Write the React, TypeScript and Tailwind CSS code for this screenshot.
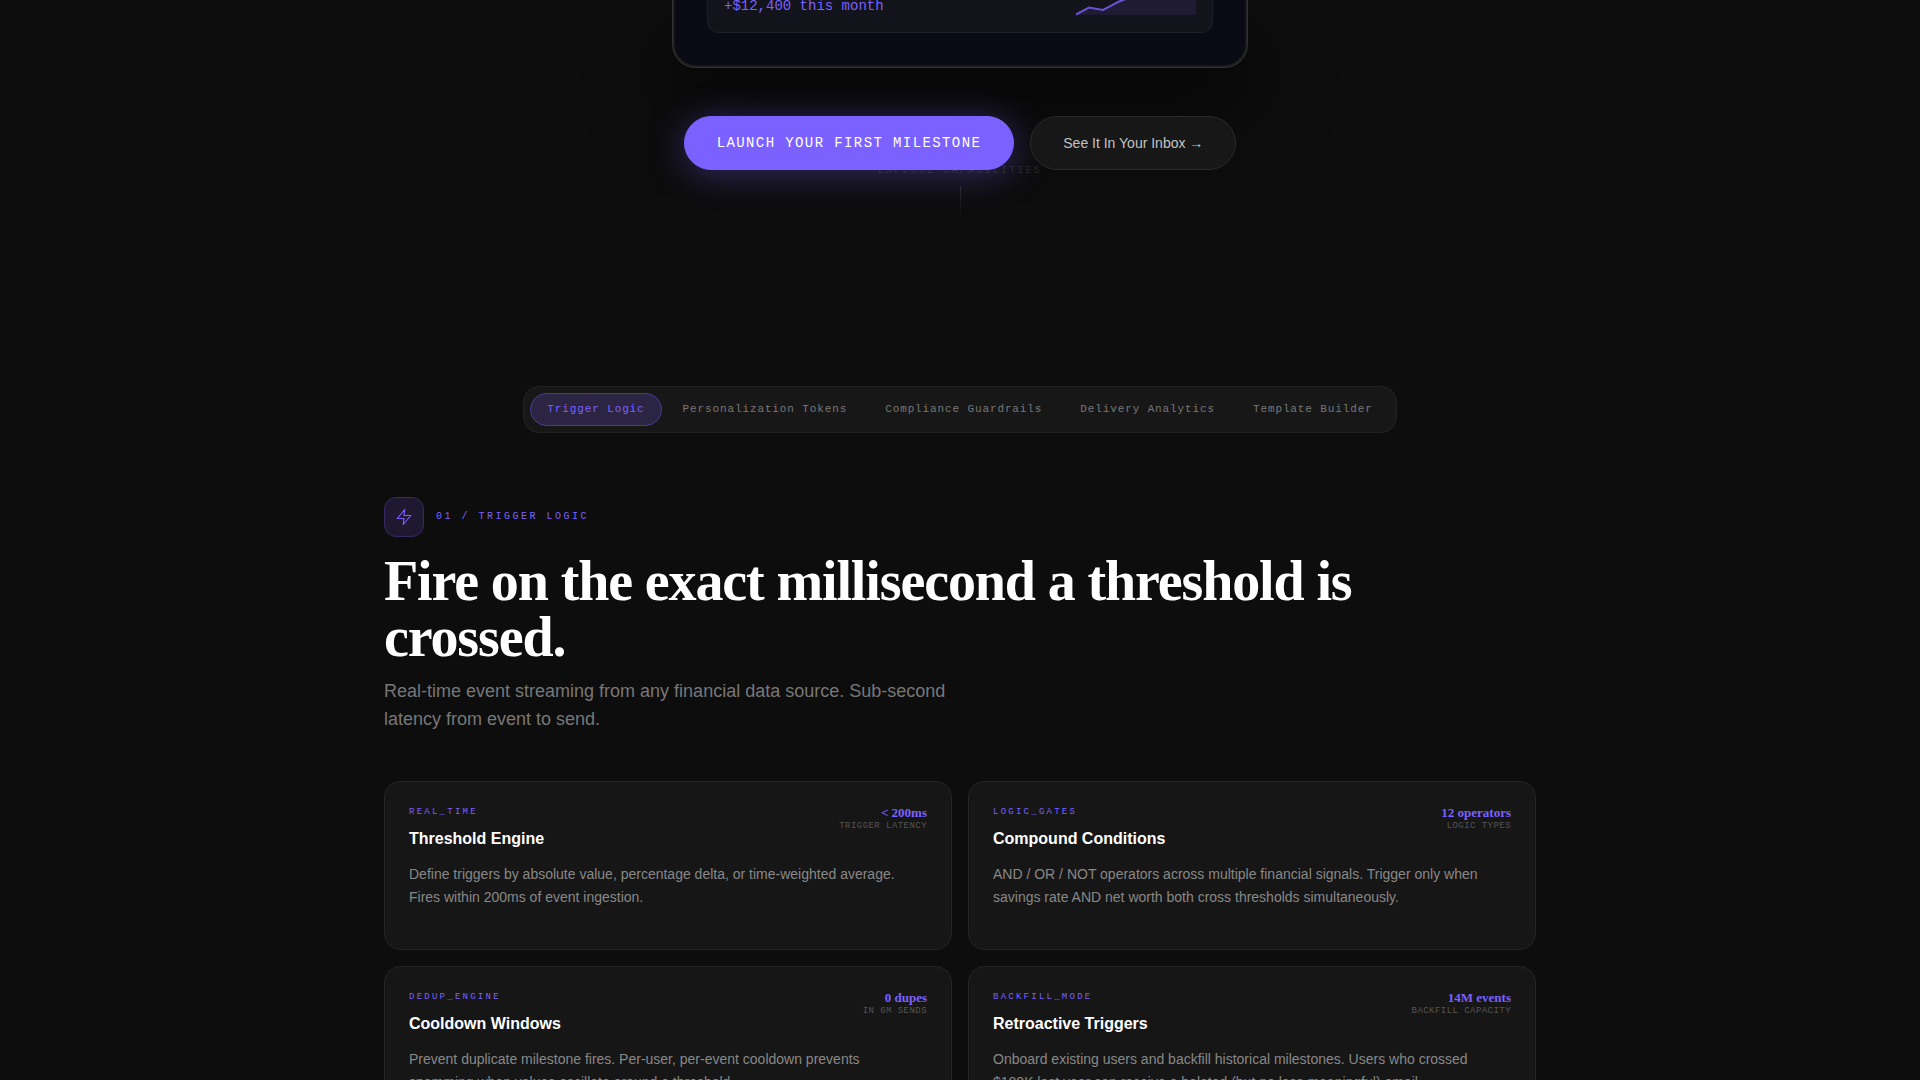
import { useState } from "react";

const tabs = [
  "Trigger Logic",
  "Personalization Tokens",
  "Compliance Guardrails",
  "Delivery Analytics",
  "Template Builder",
];

const features = [
  {
    tag: "REAL_TIME",
    title: "Threshold Engine",
    body: "Define triggers by absolute value, percentage delta, or time-weighted average. Fires within 200ms of event ingestion.",
    stat: "< 200ms",
    statLabel: "TRIGGER LATENCY",
  },
  {
    tag: "LOGIC_GATES",
    title: "Compound Conditions",
    body: "AND / OR / NOT operators across multiple financial signals. Trigger only when savings rate AND net worth both cross thresholds simultaneously.",
    stat: "12 operators",
    statLabel: "LOGIC TYPES",
  },
  {
    tag: "DEDUP_ENGINE",
    title: "Cooldown Windows",
    body: "Prevent duplicate milestone fires. Per-user, per-event cooldown prevents spamming when values oscillate around a threshold.",
    stat: "0 dupes",
    statLabel: "IN 6M SENDS",
  },
  {
    tag: "BACKFILL_MODE",
    title: "Retroactive Triggers",
    body: "Onboard existing users and backfill historical milestones. Users who crossed $100K last year can receive a belated (but no less meaningful) email.",
    stat: "14M events",
    statLabel: "BACKFILL CAPACITY",
  },
];

function BoltIcon() {
  return (
    <svg
      width="18"
      height="18"
      viewBox="0 0 24 24"
      fill="none"
      stroke="currentColor"
      strokeWidth="1.5"
      strokeLinecap="round"
      strokeLinejoin="round"
      aria-hidden="true"
    >
      <path d="M13 2 L3 14 H12 L11 22 L21 10 H12 Z" />
    </svg>
  );
}

function EmailPreview() {
  return (
    <div className="w-full max-w-xl rounded-b-3xl border border-t-0 border-[#333] bg-[#1a1a1a] px-0.5 pb-0.5 shadow-[0_40px_80px_rgba(0,0,0,0.6)]">
      <div className="rounded-b-[21px] bg-[#0a0a14] px-8 pb-8">
        <div className="flex h-[33px] items-end justify-between rounded-b-xl border border-t-0 border-[#1f1f28] bg-[#13131b] px-4 pb-4">
          <p className="font-['Liberation_Mono',monospace] text-sm leading-5 text-[#7b61ff]">+$12,400 this month</p>
          <svg width="120" height="16" viewBox="0 0 120 16" fill="none" aria-hidden="true">
            <path d="M0 15 L13 7.5 L27 10 L43 2 L50 -1 H120 V15 Z" fill="#7b61ff" fillOpacity="0.1" />
            <path d="M0 14.5 L13 7.5 L27 10 L43 1.5 L50 -1" stroke="#7b61ff" strokeOpacity="0.8" strokeWidth="2" />
          </svg>
        </div>
      </div>
    </div>
  );
}

function Hero() {
  return (
    <section className="relative flex h-[218px] flex-col items-center">
      <EmailPreview />
      <div className="z-10 mt-12 flex items-center gap-4">
        <button className="rounded-full border border-[#7b61ff] bg-[#7b61ff] px-8 py-4 font-['Liberation_Mono',monospace] text-sm leading-5 tracking-widest text-white shadow-[0_4px_36px_rgba(123,97,255,0.36)]">
          LAUNCH YOUR FIRST MILESTONE
        </button>
        <button className="rounded-full border border-[#2a2a2a] bg-[#171717] px-8 py-4 text-sm leading-5 text-[#c4c4c4]">
          See It In Your Inbox →
        </button>
      </div>
      <div className="absolute bottom-0 flex flex-col items-center gap-2">
        <span className="font-['Liberation_Mono',monospace] text-[10px] leading-[15px] tracking-[0.22em] text-[#262626]">
          EXPLORE CAPABILITIES
        </span>
        <span className="h-8 w-px bg-linear-to-b from-[#2a2a2a] to-transparent" />
      </div>
    </section>
  );
}

function FeatureCard({ feature }: { feature: (typeof features)[number] }) {
  return (
    <article className="rounded-2xl border border-[#242424] bg-[#161616] p-6 pb-10">
      <div className="mb-3 flex items-start justify-between">
        <div>
          <p className="mb-2 font-['Liberation_Mono',monospace] text-[9px] leading-[13px] tracking-[0.25em] text-[#7b61ff]">
            {feature.tag}
          </p>
          <h3 className="text-base font-bold text-white">{feature.title}</h3>
        </div>
        <div className="text-right">
          <p className="font-['Liberation_Serif',serif] text-[13px] leading-[14px] font-bold text-[#7b61ff]">
            {feature.stat}
          </p>
          <p className="font-['Liberation_Mono',monospace] text-[9px] leading-3 tracking-wider text-[#555]">
            {feature.statLabel}
          </p>
        </div>
      </div>
      <p className="text-sm leading-[23px] text-[#888]">{feature.body}</p>
    </article>
  );
}

export default function App() {
  const [active, setActive] = useState(tabs[0]);

  return (
    <main className="min-h-screen overflow-hidden bg-[#0d0d0d] font-['Liberation_Sans',sans-serif]">
      <Hero />

      <section className="mx-auto mt-[168px] w-full max-w-6xl">
        <nav className="mx-auto flex w-fit gap-1 rounded-2xl border border-[#222] bg-[#171717] p-1.5">
          {tabs.map((tab) => (
            <button
              key={tab}
              onClick={() => setActive(tab)}
              className={`rounded-full border px-4 py-2 font-['Liberation_Mono',monospace] text-[11px] leading-[15px] tracking-[0.08em] ${
                tab === active ? "border-[#4a3d8f] bg-[#2b2442] text-[#7b61ff]" : "border-transparent text-[#777]"
              }`}
            >
              {tab}
            </button>
          ))}
        </nav>

        <header className="mt-16">
          <div className="mb-4 flex items-center gap-3">
            <span className="flex size-10 items-center justify-center rounded-xl border border-[#35295f] bg-[#1e1930] text-[#7b61ff]">
              <BoltIcon />
            </span>
            <span className="font-['Liberation_Mono',monospace] text-[10px] leading-4 tracking-[0.25em] text-[#7b61ff]">
              01 / TRIGGER LOGIC
            </span>
          </div>
          <h2 className="font-['Liberation_Serif',serif] text-[56px] leading-[56px] font-bold tracking-[-0.02em] text-white">
            Fire on the exact millisecond a threshold is crossed.
          </h2>
          <p className="mt-3 max-w-xl text-lg leading-7 text-[#777]">
            Real-time event streaming from any financial data source. Sub-second latency from event to send.
          </p>
        </header>

        <div className="mt-12 grid grid-cols-2 gap-4">
          {features.map((feature) => (
            <FeatureCard key={feature.tag} feature={feature} />
          ))}
        </div>
      </section>
    </main>
  );
}
